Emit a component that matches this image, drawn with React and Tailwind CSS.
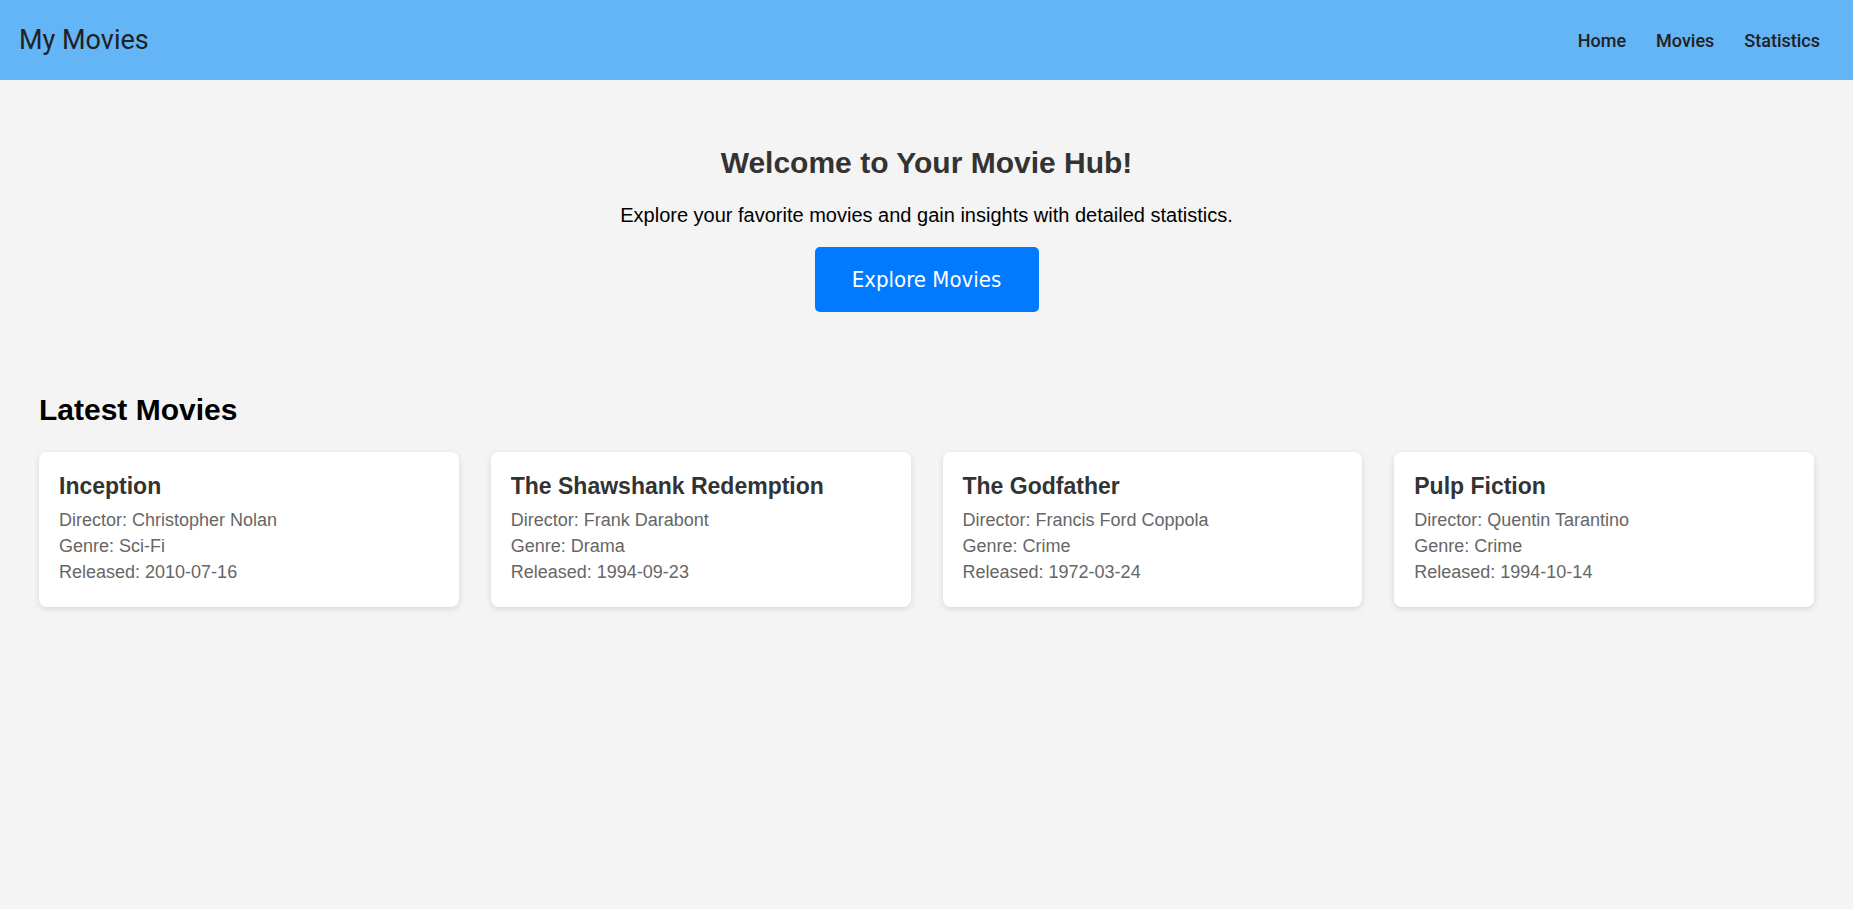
import React from "react";

const movies = [
  { title: "Inception", director: "Christopher Nolan", genre: "Sci-Fi", released: "2010-07-16" },
  { title: "The Shawshank Redemption", director: "Frank Darabont", genre: "Drama", released: "1994-09-23" },
  { title: "The Godfather", director: "Francis Ford Coppola", genre: "Crime", released: "1972-03-24" },
  { title: "Pulp Fiction", director: "Quentin Tarantino", genre: "Crime", released: "1994-10-14" },
];

function MovieCard({ m }) {
  return (
    <div className="bg-white rounded-lg shadow-[0_2px_6px_rgba(0,0,0,0.12)] px-5 pt-[21px] pb-[24px]">
      <h3 className="text-[23px] leading-[26px] font-bold text-[#333]">{m.title}</h3>
      <p className="mt-[11px] text-[18px] leading-[21px] text-[#666]">Director: {m.director}</p>
      <p className="mt-[5px] text-[18px] leading-[21px] text-[#666]">Genre: {m.genre}</p>
      <p className="mt-[5px] text-[18px] leading-[21px] text-[#666]">Released: {m.released}</p>
    </div>
  );
}

export default function App() {
  return (
    <div className="min-h-screen bg-[#f4f4f4] font-['Liberation_Sans',Arial,sans-serif]">
      <header className="h-20 bg-[#64b5f6] flex items-center justify-between pl-[19px] pr-4 font-['Roboto',sans-serif] text-[#212121]">
        <div className="text-[27px] leading-none">My Movies</div>
        <nav className="flex items-center">
          <a className="px-[15px] text-[18px] font-medium">Home</a>
          <a className="px-[15px] text-[18px] font-medium">Movies</a>
          <a className="pl-[15px] pr-[17px] text-[18px] font-medium">Statistics</a>
        </nav>
      </header>

      <section className="flex flex-col items-center pt-[65px]">
        <h1 className="text-[30px] leading-[36px] font-bold text-[#333]">Welcome to Your Movie Hub!</h1>
        <p className="mt-[22px] text-[20px] leading-[24px] text-black">
          Explore your favorite movies and gain insights with detailed statistics.
        </p>
        <button className="mt-[20px] w-[224px] h-[65px] rounded-[5px] bg-[#007bff] text-white text-[22px] font-['DejaVu_Sans_Condensed','DejaVu_Sans',sans-serif]">
          Explore Movies
        </button>
      </section>

      <section className="px-[39px] pt-[80px]">
        <h2 className="text-[30px] leading-[36px] font-bold text-black">Latest Movies</h2>
        <div className="mt-6 grid grid-cols-4 gap-8">
          {movies.map((m) => (
            <MovieCard key={m.title} m={m} />
          ))}
        </div>
      </section>
    </div>
  );
}
